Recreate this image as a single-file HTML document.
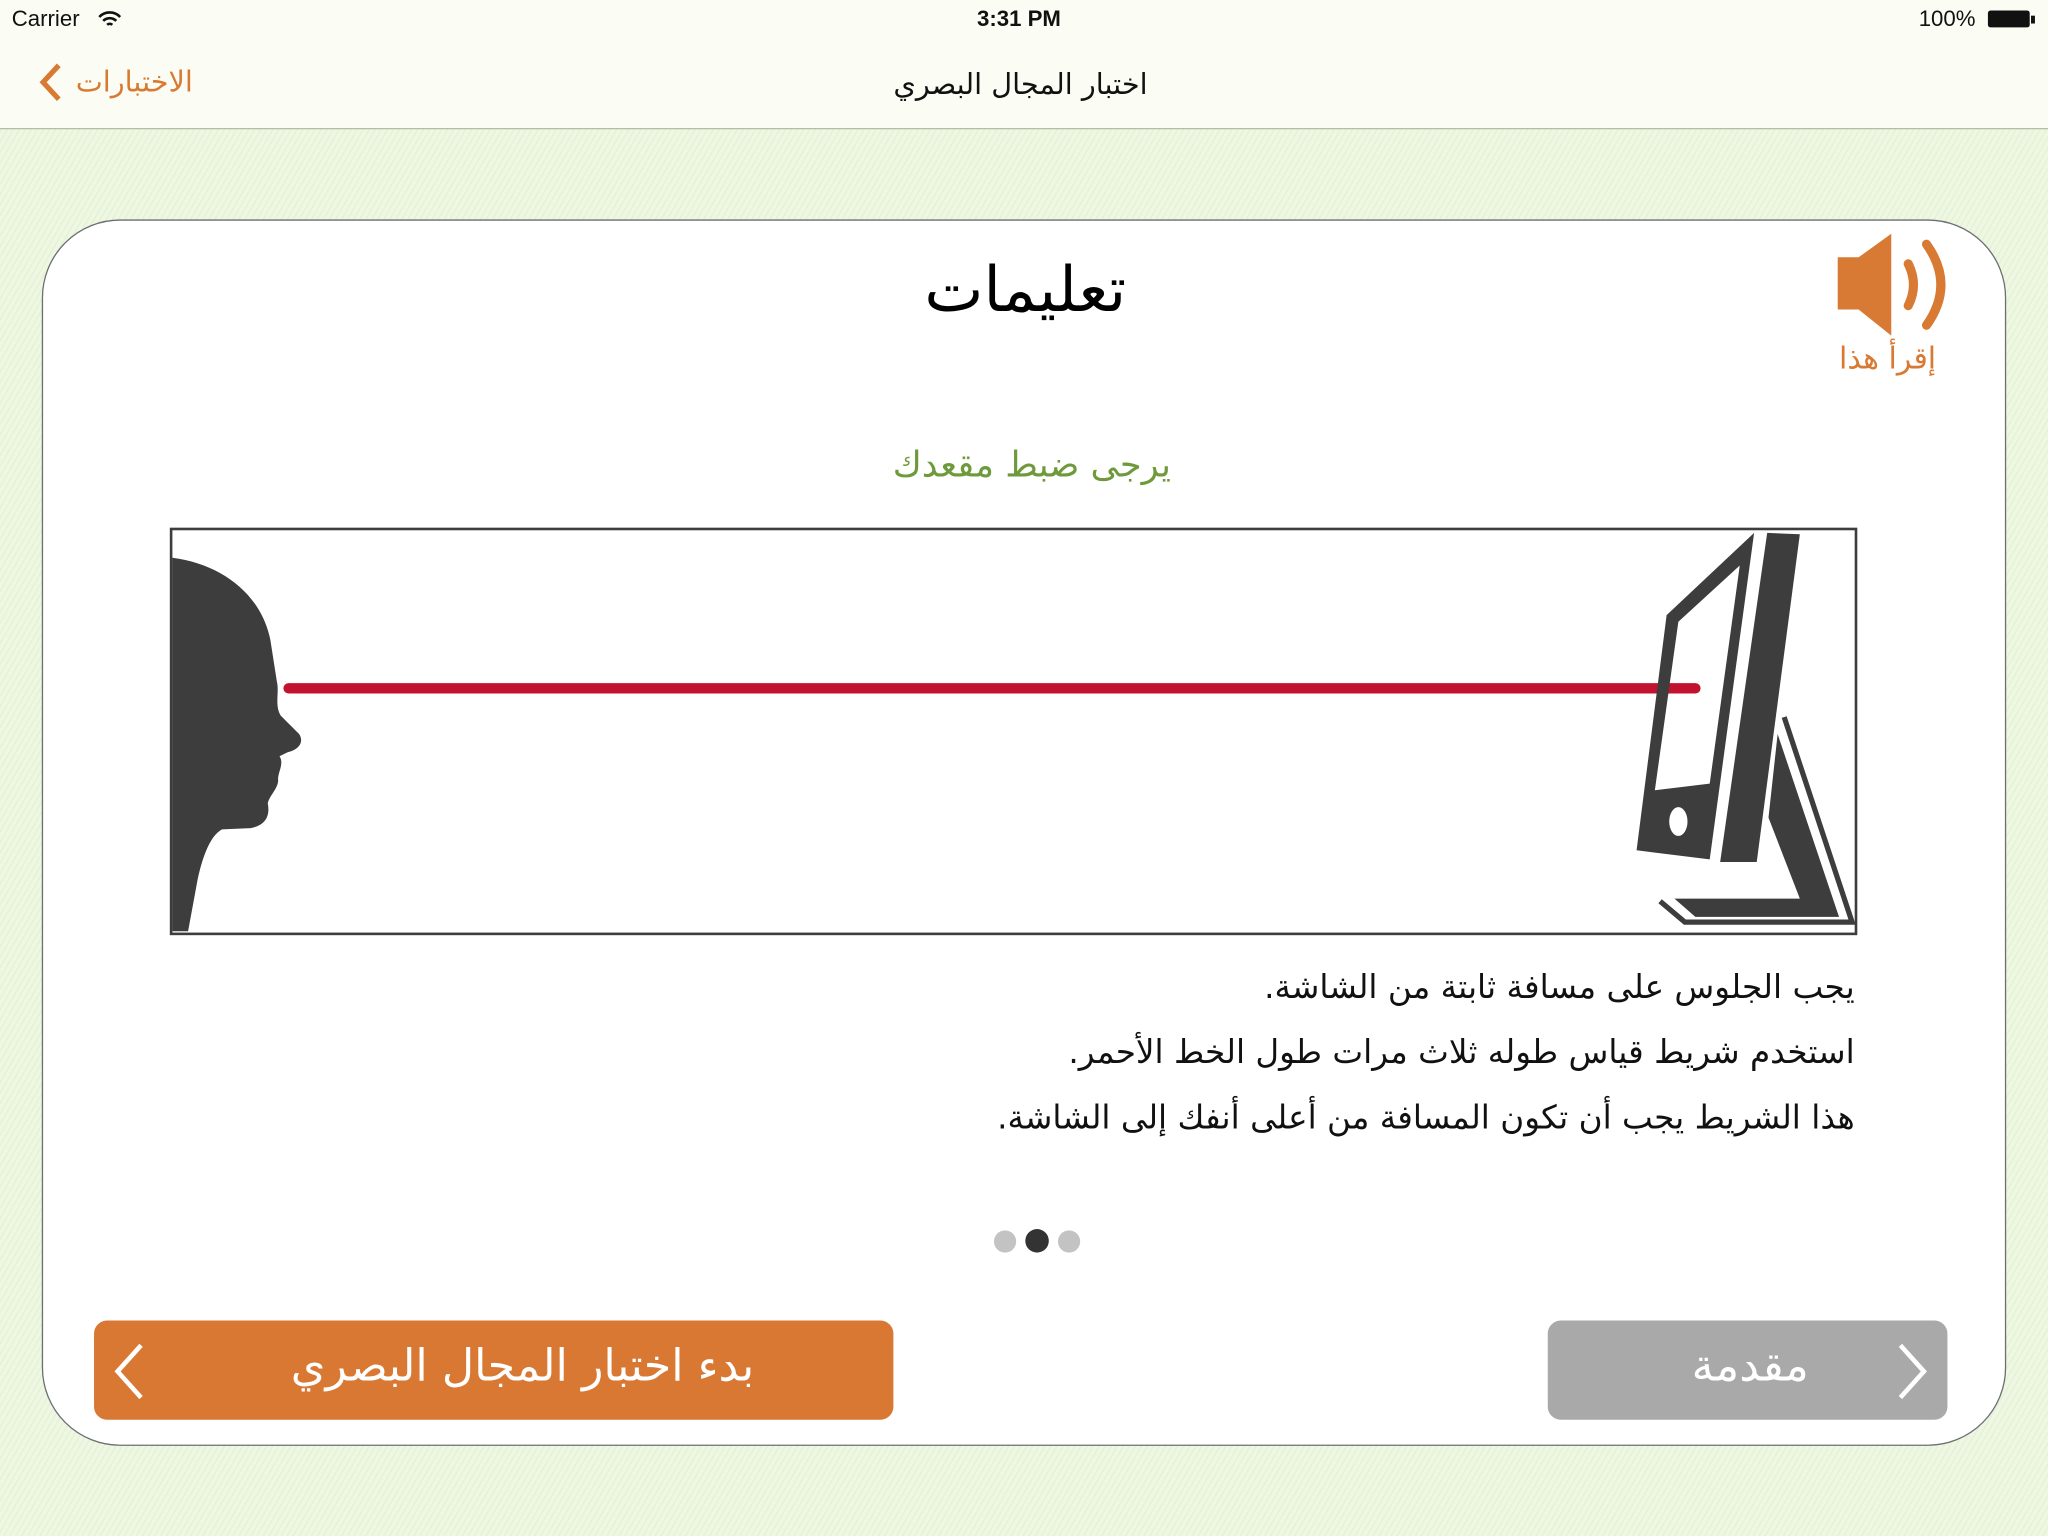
<!DOCTYPE html>
<html><head><meta charset="utf-8"><style>
html,body{margin:0;padding:0;width:2048px;height:1536px;overflow:hidden;background:#eef6df;}
#w{position:absolute;left:0;top:0;width:1568px;height:1176px;transform:scale(1.306122);transform-origin:0 0;
background:repeating-linear-gradient(-60deg,#eef7e1 0 3px,#e6f0d6 3px 4px);font-family:"Liberation Sans","Noto Sans CJK SC",sans-serif;}
.a{position:absolute;white-space:nowrap;}
#nav{position:absolute;left:0;top:0;width:1568px;height:98px;background:#fbfdf4;border-bottom:1px solid #b5bcab;}
#card{position:absolute;left:32px;top:168px;width:1502px;height:937px;background:#fff;border:1.5px solid #6c6f72;border-radius:60px;}
.ar{direction:rtl;font-family:"DejaVu Sans","Noto Sans CJK SC",sans-serif;}
.btn{position:absolute;top:1011px;height:76px;border-radius:10px;color:#fff;}
</style></head><body><div id="w">
<div id="nav">
<div class="a" style="left:9px;top:5px;font-size:17px;color:#111">Carrier</div>
<svg class="a" style="left:74px;top:7px" width="20" height="16" viewBox="0 0 20 16"><path d="M2 6a11 11 0 0 1 16 0M5 9a7 7 0 0 1 10 0M8 12a3 3 0 0 1 4 0" stroke="#111" stroke-width="2" fill="none"/></svg>
<div class="a" style="left:748px;top:5px;font-size:17px;color:#111;font-weight:bold">3:31 PM</div>
<div class="a" style="left:1469px;top:5px;font-size:17px;color:#111">100%</div>
<div class="a" style="left:1522px;top:8px;width:32px;height:13px;background:#111;border-radius:2px"></div>
<div class="a" style="left:1555px;top:12px;width:3px;height:6px;background:#111"></div>
<svg class="a" style="left:28px;top:48px" width="24" height="32"><path d="M17 2L5 15l12 13" stroke="#d87a33" stroke-width="4" fill="none"/></svg>
<div class="a ar" style="left:58px;top:51px;font-size:22px;color:#d87a33">الاختبارات</div>
<div class="a ar" style="left:684px;top:53px;font-size:22px;color:#111">اختبار المجال البصري</div>
</div>
<div id="card"></div>
<div class="a ar" style="left:700px;top:194px;font-size:48px;color:#000;width:170px;text-align:center">تعليمات</div>
<svg class="a" style="left:1400px;top:175px" width="100" height="90"><path d="M7 22h16l25-18v78L23 62H7z" fill="#d87a33"/><path d="M61 27q8 16 0 32M75 12q22 31 0 62" stroke="#d87a33" stroke-width="7" fill="none" stroke-linecap="round"/></svg>
<div class="a ar" style="left:1408px;top:262px;font-size:23px;color:#d87a33">إقرأ هذا</div>
<div class="a ar" style="left:670px;top:341px;font-size:27px;color:#6e9a3c;width:240px;text-align:center">يرجى ضبط مقعدك</div>
<div class="a" style="left:130px;top:404px;width:1288px;height:308px;border:2px solid #3d3d3d;background:#fff"></div>
<svg class="a" style="left:0;top:0" width="1568" height="1176">
<path d="M132 427C170 432 200 455 207 490L212 522C214 530 210 540 215 548L229 562C233 568 229 574 220 576L214 579C218 585 212 592 213 598C212 605 207 608 205 615C207 625 203 632 192 634L170 635C160 640 154 660 151 675L144 713L132 713Z" fill="#3d3d3d"/>
<line x1="221" y1="527" x2="1298" y2="527" stroke="#c3122f" stroke-width="8" stroke-linecap="round"/>
<path fill-rule="evenodd" fill="#3d3d3d" d="M1343 408L1276 471L1253 651L1309 658ZM1332 433L1285 476L1267 605L1309 600Z"/>
<ellipse cx="1285" cy="629" rx="7" ry="11" fill="#fff"/>
<path d="M1353 408L1378 409L1345 660L1317 660Z" fill="#3d3d3d"/>
<path d="M1361 562L1354 626L1378 688L1282 688L1298 702L1408 702Z" fill="#3d3d3d"/>
<path d="M1366 549L1418 706L1290 706L1271 690" stroke="#3d3d3d" stroke-width="4" fill="none"/>
</svg>
<div class="a ar" style="right:148px;top:731px;font-size:25px;color:#111;line-height:50px;text-align:right">يجب الجلوس على مسافة ثابتة من الشاشة.<br>استخدم شريط قياس طوله ثلاث مرات طول الخط الأحمر.<br>هذا الشريط يجب أن تكون المسافة من أعلى أنفك إلى الشاشة.</div>
<div class="a" style="left:761px;top:942px;width:17px;height:17px;border-radius:50%;background:#c3c3c3"></div>
<div class="a" style="left:785px;top:941px;width:18px;height:18px;border-radius:50%;background:#333"></div>
<div class="a" style="left:810px;top:942px;width:17px;height:17px;border-radius:50%;background:#c3c3c3"></div>
<div class="btn" style="left:72px;width:612px;background:#d97832">
<svg class="a" style="left:12px;top:16px" width="30" height="46"><path d="M24 3L6 23l18 20" stroke="#fff" stroke-width="3.5" fill="none"/></svg>
<div class="a ar" style="left:128px;top:15px;font-size:34px;width:400px;text-align:center">بدء اختبار المجال البصري</div></div>
<div class="btn" style="left:1185px;width:306px;background:#a9a9a9">
<svg class="a" style="left:264px;top:16px" width="30" height="46"><path d="M6 3l18 20L6 43" stroke="#fff" stroke-width="3.5" fill="none"/></svg>
<div class="a ar" style="left:100px;top:15px;font-size:34px;width:110px;text-align:center">مقدمة</div></div>
</div></body></html>
